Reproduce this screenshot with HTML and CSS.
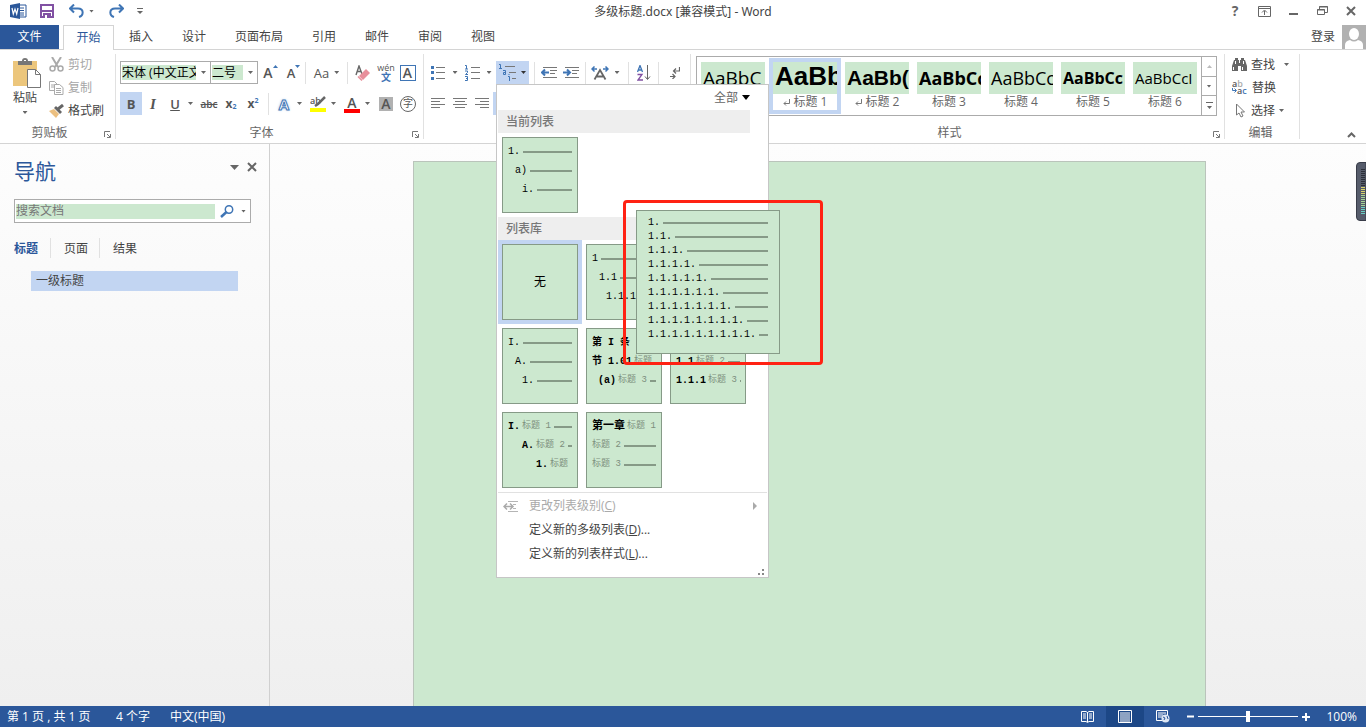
FILE: index.html
```html
<!DOCTYPE html>
<html lang="zh-CN">
<head>
<meta charset="utf-8">
<meta name="viewport" content="width=device-width, initial-scale=1">
<title>多级标题.docx - Word</title>
<link rel="stylesheet" href="styles.css">
</head>
<body>
<div class="app">
  <header class="titlebar">
    <div class="quick">
      <svg class="quick__logo" width="17" height="16" viewBox="0 0 17 16"><path d="M9 2h7v12H9z" fill="#fff" stroke="#2b579a"/><path d="M10 5h4M10 7.500h4M10 10h4M10 12h4" stroke="#2b579a"/><path d="M0 2l10-2v16L0 14z" fill="#2b579a"/><path d="M2 5l1.300 6L5 6l1.700 5L8 5" fill="none" stroke="#fff" stroke-width="1.200"/></svg>
      <button class="quick__btn quick__save" aria-label="保存"><svg width="14" height="14" viewBox="0 0 14 14"><path d="M1 1h12v12H1z" fill="#fff" stroke="#8151a3" stroke-width="2"/><path d="M2 7h10" stroke="#8151a3" stroke-width="2"/><path d="M3 9h8v5H3z" fill="#8151a3"/><path d="M5 11h2v3H5z" fill="#fff"/></svg></button>
      <button class="quick__btn quick__undo" aria-label="撤消"><svg width="15" height="14" viewBox="0 0 15 14"><path d="M1 4.500h8c6 0 6 7 1 8.500M5 0.500L1 4.500l4 4" fill="none" stroke="#3f75b5" stroke-width="2"/></svg><i class="caret"></i></button>
      <button class="quick__btn quick__redo" aria-label="重复"><svg width="15" height="14" viewBox="0 0 15 14"><path d="M14 4.500H6c-6 0-6 7-1 8.500M10 0.500l4 4-4 4" fill="none" stroke="#3f75b5" stroke-width="2"/></svg></button>
      <button class="quick__btn" aria-label="自定义快速访问工具栏"><svg width="6" height="6" viewBox="0 0 6 6"><path d="M0 .5h6" stroke="#666"/><path d="M0 3h6L3 6z" fill="#666"/></svg></button>
    </div>
    <h1 class="titlebar__name">多级标题.docx [兼容模式] - Word</h1>
    <div class="window-tools">
      <button class="window-tools__help" aria-label="帮助">?</button>
      <button aria-label="功能区显示选项"><svg width="13" height="11" viewBox="0 0 13 11"><path d="M.5.500h12v10H.5zM.5 2.500h12M6.500 9V5M4 6.500L6.500 4 9 6.500" fill="none" stroke="#666"/></svg></button>
      <button aria-label="最小化"><svg width="9" height="11" viewBox="0 0 9 11"><path d="M0 8h9" stroke="#666" stroke-width="2"/></svg></button>
      <button aria-label="还原"><svg width="11" height="10" viewBox="0 0 11 10"><path d="M2.500 3V.5h8v6H8M2 1h9M.5 3.500h7v5h-7zM0 4h8" fill="none" stroke="#666"/></svg></button>
      <button aria-label="关闭"><svg width="10" height="10" viewBox="0 0 10 10"><path d="M1 1l8 8M9 1L1 9" stroke="#666" stroke-width="2"/></svg></button>
    </div>
  </header>

  <nav class="tabs">
    <button class="tabs__file">文件</button>
    <button class="tabs__active">开始</button>
    <div class="tabs__rest">
      <button>插入</button><button>设计</button><button>页面布局</button><button>引用</button><button>邮件</button><button>审阅</button><button>视图</button>
    </div>
    <div class="account"><a href="#login">登录</a>
      <svg width="24" height="24" viewBox="0 0 24 24"><path d="M0 0h24v24H0z" fill="#b1b1b1"/><ellipse cx="12" cy="9" rx="5" ry="6" fill="#fff"/><path d="M3 24v-4q0-4 5-5 4 3 8 0 5 1 5 5v4z" fill="#fff"/></svg>
    </div>
  </nav>

  <section class="ribbon">
    <div class="group group--clip">
      <div class="group__body clip">
        <button class="paste">
          <svg width="28" height="32" viewBox="0 0 28 32"><path d="M0 3h24v25H0z" fill="#ecc67c"/><path d="M5 3h4q0-3 3-3t3 3h4v4H5z" fill="#777"/><path d="M11 2.500h2" stroke="#fff"/><path d="M14.500 11.500h8l5 5v13h-13z" fill="#fff" stroke="#777"/><path d="M22.500 11.500v5h5" fill="none" stroke="#777"/></svg>
          <span>粘贴</span><i class="caret"></i>
        </button>
        <div class="stack">
          <button class="stack__btn off"><svg width="15" height="15" viewBox="0 0 15 15"><path d="M3 0l6 10M12 0L6 10" stroke="#aaa" stroke-width="2"/><circle cx="3.500" cy="11.500" r="2.500" fill="none" stroke="#aaa" stroke-width="1.500"/><circle cx="11.500" cy="11.500" r="2.500" fill="none" stroke="#aaa" stroke-width="1.500"/></svg>剪切</button>
          <button class="stack__btn off"><svg width="15" height="14" viewBox="0 0 15 14"><path d="M.5.500h5l3 3v6h-8zM2 4h4M2 6h3" fill="none" stroke="#aaa"/><path d="M5.500 3.500h5l3.500 3v7H5.500zM7 7.500h5M7 9.500h5M7 11.500h5" fill="#fff" stroke="#aaa"/></svg>复制</button>
          <button class="stack__btn"><svg width="15" height="14" viewBox="0 0 15 14"><path d="M0 7l5-2 5 5-3 4z" fill="#ecc081"/><path d="M5 4l2-2 6 6-2 2z" fill="#666"/><path d="M9 5l5-4" stroke="#666" stroke-width="3"/></svg>格式刷</button>
        </div>
      </div>
      <div class="group__foot"><span>剪贴板</span><button class="launch" aria-label="剪贴板设置"><svg width="7" height="7" viewBox="0 0 7 7"><path d="M.5 6V.5H6M3 3l3 3M6.500 3v3.500H3" fill="none" stroke="#777"/></svg></button></div>
    </div>

    <div class="group group--font">
      <div class="group__body rows">
        <div class="row">
          <div class="combo combo--face"><input value="宋体 (中文正文)" aria-label="字体"><i class="caret"></i></div>
          <div class="combo combo--size"><input value="二号" aria-label="字号"><i class="caret"></i></div>
          <button class="tool" aria-label="增大字号"><span class="grow">A</span><svg class="up" width="5" height="3" viewBox="0 0 5 3"><path d="M0 3h5L2.500 0z" fill="#3f75b5"/></svg></button>
          <button class="tool" aria-label="减小字号"><span class="shrink">A</span><svg class="up" width="5" height="3" viewBox="0 0 5 3"><path d="M0 0h5L2.500 3z" fill="#3f75b5"/></svg></button>
          <i class="sep"></i>
          <button class="tool tool--case" aria-label="更改大小写">Aa<i class="caret"></i></button>
          <i class="sep"></i>
          <button class="tool" aria-label="清除格式"><svg width="15" height="16" viewBox="0 0 15 16"><path d="M1 10L4 1l3 8M2 6.500h4" fill="none" stroke="#666" stroke-width="1.400"/><path d="M11 4l4 4-7 7-4-4z" fill="#e8909c"/><path d="M3 11.500l4 4" stroke="#e8909c" stroke-width="1.500"/></svg></button>
          <button class="tool pinyin" aria-label="拼音指南"><span>wén</span><b>文</b></button>
          <button class="tool" aria-label="字符边框"><span class="boxed">A</span></button>
        </div>
        <div class="row">
          <button class="tool on strong">B</button>
          <button class="tool ital">I</button>
          <button class="tool under">U</button>
          <button class="caret-btn" aria-label="下划线样式"><i class="caret"></i></button>
          <button class="tool strike">abc</button>
          <button class="tool script">x<sub>2</sub></button>
          <button class="tool script">x<sup>2</sup></button>
          <i class="sep sep--wide"></i>
          <button class="tool" aria-label="文本效果"><span class="glow">A</span></button><button class="caret-btn" aria-label="文本效果选项"><i class="caret"></i></button>
          <button class="tool ink ink--yellow" aria-label="突出显示"><svg width="16" height="17" viewBox="0 0 16 17"><text x="0" y="9" class="ab">ab</text><path d="M15 2L8 9l-3 2" stroke="#666" stroke-width="2.500" fill="none"/><path d="M0 13h16v4H0z" fill="#ff0"/></svg></button><button class="caret-btn" aria-label="突出显示颜色"><i class="caret"></i></button>
          <button class="tool" aria-label="字体颜色"><span class="redbar">A</span></button><button class="caret-btn" aria-label="更多字体颜色"><i class="caret"></i></button>
          <button class="tool" aria-label="字符底纹"><span class="shade">A</span></button>
          <button class="tool" aria-label="带圈字符"><span class="ring">字</span></button>
        </div>
      </div>
      <div class="group__foot"><span>字体</span><button class="launch" aria-label="字体设置"><svg width="7" height="7" viewBox="0 0 7 7"><path d="M.5 6V.5H6M3 3l3 3M6.500 3v3.500H3" fill="none" stroke="#777"/></svg></button></div>
    </div>

    <div class="group group--para">
      <div class="group__body rows">
        <div class="row">
          <button class="tool" aria-label="项目符号"><svg width="14" height="15" viewBox="0 0 14 15"><path d="M5 2.500h9M5 7.500h9M5 13.500h9" stroke="#777"/><path d="M0 1h3v3H0zM0 6h3v3H0zM0 12h3v3H0z" fill="#3f75b5"/></svg></button><button class="caret-btn" aria-label="项目符号库"><i class="caret"></i></button>
          <button class="tool" aria-label="编号"><svg width="15" height="17" viewBox="0 0 15 17"><path d="M6 3.500h9M6 8.500h9M6 14.500h9" stroke="#777"/><path d="M0 1.500h1.500V5M0 5h3M0 7h2.500v1.500L.5 10.500H3M0 12.500h2.500v4H0M1 14.500h1.500" fill="none" stroke="#3f75b5"/></svg></button><button class="caret-btn" aria-label="编号库"><i class="caret"></i></button>
          <div class="multi">
            <button class="multi__btn" aria-label="多级列表" aria-expanded="true"><svg width="17" height="17" viewBox="0 0 17 17"><path d="M6 2.500h10M10 8.500h7M13 14.500h4" stroke="#777"/><path d="M0 .5h1.500V4M0 4.500h3M4 6.500h2.500v4H4.500v-2h2M9 12.500h1.500V17M10 10v1" fill="none" stroke="#3f75b5"/></svg><i class="caret caret--dark"></i></button>

            <div class="menu">
              <div class="menu__filter"><button>全部<i class="caret caret--big"></i></button></div>
              <h2 class="menu__head">当前列表</h2>
              <div class="tiles">
                <button class="tile"><span class="line">1.<i></i></span><span class="line in1">a)<i></i></span><span class="line in2">i.<i></i></span></button>
              </div>
              <h2 class="menu__head">列表库</h2>
              <div class="tiles">
                <button class="tile tile--none">无</button>
                <button class="tile"><span class="line">1<i></i></span><span class="line in1">1.1<i></i></span><span class="line in2">1.1.1<i></i></span></button>
                <button class="tile" aria-label="项目符号列表"><span class="line"><i></i></span><span class="line in1"><i></i></span><span class="line in2"><i></i></span></button>
                <button class="tile"><span class="line">I.<i></i></span><span class="line in1">A.<i></i></span><span class="line in2">1.<i></i></span></button>
                <button class="tile"><span class="line"><b>第 I 条</b></span><span class="line"><b>节 1.01</b><em>标题</em></span><span class="line"><b>&nbsp;(a)</b><em>标题 3</em><i></i></span></button>
                <button class="tile"><span class="line"><i></i></span><span class="line"><b>1.1</b><em>标题 2</em><i></i></span><span class="line"><b>1.1.1</b><em>标题 3</em><i></i></span></button>
                <button class="tile"><span class="line"><b>I.</b><em>标题 1</em><i></i></span><span class="line in2"><b>A.</b><em>标题 2</em><i></i></span><span class="line in4"><b>1.</b><em>标题</em></span></button>
                <button class="tile"><span class="line"><b class="chapter">第一章</b><em>标题 1</em></span><span class="line"><em>标题 2</em><i></i></span><span class="line"><em>标题 3</em><i></i></span></button>
              </div>
              <div class="menu__actions">
                <button disabled><svg width="16" height="11" viewBox="0 0 16 11"><path d="M5 .5h10M10 3.500h3M10 7.500h3M5 10.500h10" stroke="#b5b5b5"/><path d="M1 5.500h9M4 2.500l-3 3 3 3M7 2.500l3 3-3 3" fill="none" stroke="#aaa" stroke-width="1.500"/></svg><span>更改列表级别(<u>C</u>)</span><svg class="more" width="4" height="8" viewBox="0 0 4 8"><path d="M0 0v8l4-4z" fill="#aaa"/></svg></button>
                <button><span>定义新的多级列表(<u>D</u>)...</span></button>
                <button><span>定义新的列表样式(<u>L</u>)...</span></button>
              </div>
              <svg class="menu__grip" width="6" height="6" viewBox="0 0 6 6"><path d="M4 0h2v2H4zM0 4h2v2H0zM4 4h2v2H4z" fill="#888"/></svg>
              <div class="preview">
                <span class="line">1.<i></i></span><span class="line">1.1.<i></i></span><span class="line">1.1.1.<i></i></span><span class="line">1.1.1.1.<i></i></span><span class="line">1.1.1.1.1.<i></i></span><span class="line">1.1.1.1.1.1.<i></i></span><span class="line">1.1.1.1.1.1.1.<i></i></span><span class="line">1.1.1.1.1.1.1.1.<i></i></span><span class="line">1.1.1.1.1.1.1.1.1.<i></i></span>
              </div>
              <div class="mark"></div>
            </div>
          </div>
          <i class="sep"></i>
          <button class="tool" aria-label="减少缩进量"><svg width="16" height="12" viewBox="0 0 16 12"><path d="M2 .5h14M9 3.500h7M9 6.500h5M2 10.500h14" stroke="#777"/><path d="M1 5.500h7M4 2.500l-3 3 3 3" fill="none" stroke="#3f75b5" stroke-width="2"/></svg></button>
          <button class="tool" aria-label="增加缩进量"><svg width="16" height="12" viewBox="0 0 16 12"><path d="M2 .5h14M9 3.500h7M9 6.500h5M2 10.500h14" stroke="#777"/><path d="M0 5.500h7M4 2.500l3 3-3 3" fill="none" stroke="#3f75b5" stroke-width="2"/></svg></button>
          <i class="sep"></i>
          <button class="tool" aria-label="中文版式"><svg width="18" height="14" viewBox="0 0 18 14"><path d="M3.500 13.500L9 4l5.500 9.500M6 10.500h6" fill="none" stroke="#666" stroke-width="1.800"/><path d="M1 3h5M3.500.5L1 3l2.500 2.500M12 3h5M14.500.5L17 3l-2.500 2.500" fill="none" stroke="#3f75b5" stroke-width="1.500"/></svg></button><button class="caret-btn" aria-label="中文版式选项"><i class="caret"></i></button>
          <i class="sep"></i>
          <button class="tool" aria-label="排序"><svg width="14" height="16" viewBox="0 0 14 16"><path d="M.5 7L3 0.500 5.500 7M1.500 5h3" fill="none" stroke="#3f75b5" stroke-width="1.300"/><path d="M.5 9.500H5l-4 5.500h5" fill="none" stroke="#8151a3" stroke-width="1.300"/><path d="M10.500 0v14M8 11.500l2.500 3 2.500-3" fill="none" stroke="#666"/></svg></button>
          <i class="sep"></i>
          <button class="tool marks" aria-label="显示编辑标记"><svg width="10" height="12" viewBox="0 0 10 12"><path d="M9.500 0v4H4M6 1.500L3.500 4 6 6.500M0 9.500h5M2.500 7L5 9.500 2.500 12" fill="none" stroke="#666" stroke-width="1.200"/></svg></button>
        </div>
        <div class="row">
          <button class="tool" aria-label="左对齐"><svg width="14" height="11" viewBox="0 0 14 11"><path d="M0 .5h14M0 3.500h9M0 6.500h14M0 9.500h9" stroke="#777"/></svg></button>
          <button class="tool" aria-label="居中"><svg width="14" height="11" viewBox="0 0 14 11"><path d="M0 .5h14M2 3.500h10M0 6.500h14M2 9.500h10" stroke="#777"/></svg></button>
          <button class="tool" aria-label="右对齐"><svg width="14" height="11" viewBox="0 0 14 11"><path d="M0 .5h14M5 3.500h9M0 6.500h14M5 9.500h9" stroke="#777"/></svg></button>
          <button class="tool on" aria-label="两端对齐"></button>
        </div>
      </div>
      <div class="group__foot"></div>
    </div>

    <div class="group group--styles">
      <div class="group__body gallery-wrap">
        <div class="gallery">
          <button class="style" aria-label="正文"><span class="style__sample s-body">AaBbC</span></button>
          <button class="style style--on"><span class="style__sample s-h1">AaBb</span><span class="style__name"><svg width="7" height="7" viewBox="0 0 7 7"><path d="M6.500 0v4.500H1M3 2.500l-2 2 2 2" fill="none" stroke="#777"/></svg>标题 1</span></button>
          <button class="style"><span class="style__sample s-h2">AaBb(</span><span class="style__name"><svg width="7" height="7" viewBox="0 0 7 7"><path d="M6.500 0v4.500H1M3 2.500l-2 2 2 2" fill="none" stroke="#777"/></svg>标题 2</span></button>
          <button class="style"><span class="style__sample s-h3">AaBbCc</span><span class="style__name">标题 3</span></button>
          <button class="style"><span class="style__sample s-h4">AaBbCc</span><span class="style__name">标题 4</span></button>
          <button class="style"><span class="style__sample s-h5">AaBbCc</span><span class="style__name">标题 5</span></button>
          <button class="style"><span class="style__sample s-h6">AaBbCcI</span><span class="style__name">标题 6</span></button>
          <div class="gallery__nav">
            <button aria-label="上一行"><svg width="5" height="3" viewBox="0 0 5 3"><path d="M0 3h5L2.500 0z" fill="#bbb"/></svg></button>
            <button aria-label="下一行"><i class="caret"></i></button>
            <button aria-label="其他样式"><svg width="7" height="7" viewBox="0 0 7 7"><path d="M0 .5h7" stroke="#666"/><path d="M1 4h5L3.500 7z" fill="#666"/></svg></button>
          </div>
        </div>
      </div>
      <div class="group__foot"><span>样式</span><button class="launch" aria-label="样式设置"><svg width="7" height="7" viewBox="0 0 7 7"><path d="M.5 6V.5H6M3 3l3 3M6.500 3v3.500H3" fill="none" stroke="#777"/></svg></button></div>
    </div>

    <div class="group group--edit">
      <div class="group__body">
        <div class="stack">
          <button class="stack__btn"><svg width="15" height="13" viewBox="0 0 15 13"><path d="M2 2h1V0h3v2h1v3h1V2h1V0h3v2h1l2 6v5H9V8H6v5H0V8z" fill="#666"/><path d="M3.500 3v3M11.500 3v3M1.500 9v3M10.500 9v3" stroke="#fff"/></svg>查找<i class="caret caret--far"></i></button>
          <button class="stack__btn"><svg width="16" height="17" viewBox="0 0 16 17"><text x="0" y="8" class="ab">a<tspan fill="#aaa">b</tspan></text><text x="5" y="15" class="ab">a<tspan fill="#3f75b5">c</tspan></text><path d="M.5 9v2.500H4M2.500 9.500l2 2-2 2" fill="none" stroke="#3f75b5"/></svg>替换</button>
          <button class="stack__btn"><svg width="15" height="15" viewBox="0 0 15 15"><path d="M4.500 1v11l2.500-2 2 4 2-1-2-4h3.500z" fill="#fff" stroke="#777"/></svg>选择<i class="caret"></i></button>
        </div>
      </div>
      <div class="group__foot"><span>编辑</span></div>
    </div>
    <button class="collapse" aria-label="折叠功能区"><svg width="9" height="6" viewBox="0 0 9 6"><path d="M1 5l3.500-3.500L8 5" fill="none" stroke="#666" stroke-width="2"/></svg></button>
  </section>

  <main class="work">
    <aside class="nav">
      <div class="nav__head"><h2>导航</h2><button aria-label="任务窗格选项"><svg width="9" height="5" viewBox="0 0 9 5"><path d="M0 0h9L4.500 5z" fill="#666"/></svg></button><button aria-label="关闭窗格"><svg width="10" height="10" viewBox="0 0 10 10"><path d="M1 1l8 8M9 1L1 9" stroke="#666" stroke-width="2"/></svg></button></div>
      <div class="search"><input placeholder="搜索文档" aria-label="搜索文档"><button aria-label="搜索"><svg width="14" height="13" viewBox="0 0 14 13"><circle cx="9" cy="4.500" r="3.700" fill="none" stroke="#3f75b5" stroke-width="1.500"/><path d="M6.500 7L1 12" stroke="#3f75b5" stroke-width="2.500"/></svg></button><button aria-label="搜索选项"><i class="caret"></i></button></div>
      <div class="nav__tabs"><button>标题</button><button>页面</button><button>结果</button></div>
      <a class="nav__item" href="#h1">一级标题</a>
    </aside>
    <div class="canvas"><div class="page"></div></div>
    <svg class="meter" width="10" height="59" viewBox="0 0 10 59"><path d="M10 .5H4Q.5.500.5 4v51q0 3.500 3.500 3.500h6z" fill="#565c6b" stroke="#383c48"/><path d="M6 7v18" stroke="#2b2f38" stroke-width="4" stroke-dasharray="1 1" transform="translate(1 0)"/><path d="M7 25v8" stroke="#d8d36a" stroke-width="4" stroke-dasharray="1 1"/><path d="M7 33v12" stroke="#a5d394" stroke-width="4" stroke-dasharray="1 1"/><path d="M7 45v8" stroke="#69cfc4" stroke-width="4" stroke-dasharray="1 1"/></svg>
  </main>

  <footer class="status">
    <span class="status__pages">第 1 页 , 共 1 页</span><span class="status__words">4 个字</span><span>中文(中国)</span>
    <div class="status__views">
      <button aria-label="阅读视图"><svg width="13" height="12" viewBox="0 0 13 12"><path d="M.5.500H5l1.500 1L8 .5h4.500v10H8l-1.500 1-1.500-1H.5zM6.500 1v10M2 3h3M2 5h3M2 7h3M8 3h3M8 5h3M8 7h3" fill="none" stroke="#fff"/></svg></button>
      <button class="status__on" aria-label="页面视图"><svg width="14" height="13" viewBox="0 0 14 13"><path d="M.5.500h13v12H.5zM2 3h10M2 5h10M2 7h10M2 9h10M2 11h10" fill="none" stroke="#fff"/></svg></button>
      <button aria-label="Web 版式视图"><svg width="14" height="13" viewBox="0 0 14 13"><path d="M6 10.500H.5V.5h11V5M2 3h8M2 5h5M2 7h4" fill="none" stroke="#fff"/><circle cx="9.500" cy="8.500" r="4" fill="#dce6f4"/><path d="M7 7l2 1-1 2M11 6l1 3" stroke="#2b579a" fill="none"/></svg></button>
    </div>
    <div class="zoom"><button aria-label="缩小"><svg width="7" height="7" viewBox="0 0 7 7"><path d="M0 3.500h7" stroke="#fff" stroke-width="2"/></svg></button><input type="range" min="0" max="100" value="50" aria-label="显示比例"><button aria-label="放大"><svg width="8" height="8" viewBox="0 0 8 8"><path d="M0 4h8M4 0v8" stroke="#fff" stroke-width="2"/></svg></button><span>100%</span></div>
  </footer>
</div>
</body>
</html>
```

FILE: styles.css
```css
* { box-sizing: border-box; }
body { margin: 0; font: 12px/16px "Open Sans", "Noto Sans CJK SC", sans-serif; color: #444; background: #fff; }
button { font: inherit; color: inherit; background: none; border: 0; padding: 0; margin: 0; display: flex; align-items: center; justify-content: center; white-space: nowrap; }
input { font: inherit; color: inherit; border: 0; padding: 0; margin: 0; min-width: 0; border-radius: 0; }
h1, h2 { margin: 0; font-size: 12px; font-weight: 400; }
a { color: inherit; text-decoration: none; }
svg { flex: none; display: block; }
.app { display: flex; flex-direction: column; height: 100vh; overflow: hidden; }

.caret { flex: none; width: 5px; height: 3px; background: #666; clip-path: polygon(0 0, 100% 0, 50% 100%); }
.caret--dark { background: #333; }
.caret--big { width: 8px; height: 5px; background: #000; }

/* Title bar */
.titlebar { height: 25px; flex: none; display: grid; grid-template-columns: 1fr auto 1fr; align-items: start; }
.quick { display: flex; align-items: center; padding-left: 10px; height: 22px; }
.quick__save { margin-left: 13px; }
.quick__undo { margin-left: 15px; gap: 5px; }
.quick__redo { margin-left: 15px; margin-right: 13px; }
.titlebar__name { line-height: 23px; font-family: "Noto Sans", "Noto Sans CJK SC", sans-serif; }
.window-tools { display: flex; justify-content: flex-end; align-items: center; height: 22px; padding-right: 4px; }
.window-tools button { width: 22px; margin-left: 7px; }
.window-tools .window-tools__help { font-size: 14px; font-weight: 700; color: #666; }

/* Tabs */
.tabs { height: 25px; flex: none; display: flex; border-bottom: 1px solid #d4d4d4; }
.tabs__file { width: 59px; background: #2b579a; color: #fff; }
.tabs__active { width: 51px; height: 25px; margin-left: 4px; color: #2b579a; background: #fff; border: 1px solid #d4d4d4; border-bottom: 0; }
.tabs__rest { display: flex; gap: 29px; padding-left: 15px; }
.account { margin-left: auto; display: flex; align-items: center; gap: 7px; }

/* Ribbon */
.ribbon { height: 94px; flex: none; display: flex; border-bottom: 1px solid #d4d4d4; position: relative; z-index: 2; }
.group { display: flex; flex-direction: column; padding-right: 1px; background: linear-gradient(#e1e1e1, #e1e1e1) right 4px / 1px 85px no-repeat; }
.group--clip { width: 116px; }
.group--font { width: 308px; }
.group--para { width: 267px; }
.group--styles { width: 534px; }
.group--edit { width: 75px; }
.group__body { height: 73px; }
.group__foot { height: 21px; display: flex; align-items: center; color: #666; padding: 1px 3px 0 0; }
.group__foot span { flex: 1; text-align: center; }
.launch { width: 9px; margin: 3px 0 0 4px; }
.rows { padding: 11px 0 0 4px; display: flex; flex-direction: column; gap: 8px; }
.group--para .rows { padding-left: 3px; }
.row { display: flex; height: 23px; align-items: center; }
.sep { width: 1px; height: 22px; background: #e1e1e1; margin: 0 3px; flex: none; }
.sep--wide { margin: 0 4px; }
.tool { width: 22px; height: 23px; flex: none; color: #555; font-size: 14px; }
.on { background: #c2d5f2; }
.caret-btn { width: 12px; height: 23px; flex: none; }
.group--font .caret-btn { padding-right: 3px; }
.caret-btn + .sep { margin: 0 4px 0 5px; }
.clip { display: flex; padding: 3px 0 0 10px; }
.paste { flex-direction: column; justify-content: flex-start; align-items: center; width: 30px; padding-top: 5px; }
.paste svg { margin-left: 3px; }
.paste span { margin-top: -1px; line-height: 18px; }
.paste .caret { margin-top: 4px; }
.stack { display: flex; flex-direction: column; }
.clip .stack { margin-left: 9px; }
.stack__btn { height: 23px; gap: 4px; justify-content: flex-start; }
.off { color: #a6a6a6; }
.combo { display: flex; align-items: center; border: 1px solid #ababab; height: 23px; padding: 0 4px 0 1px; gap: 5px; flex: none; color: #000; }
.combo input { flex: 1; width: 0; background: #cce8cf; height: 15px; line-height: 15px; }
.combo--face { width: 91px; }
.combo--size { width: 48px; margin-left: -1px; }
.grow { font-size: 14px; font-weight: 600; margin-left: 3px; }
.shrink { font-size: 13px; font-weight: 600; margin-left: 5px; }
.up { align-self: flex-start; margin-top: 4px; }
.tool--case { width: 35px; gap: 5px; font-size: 13px; }
.pinyin { flex-direction: column; font-size: 9px; line-height: 8px; }
.pinyin span { padding-left: 4px; }
.pinyin b { color: #3f75b5; line-height: 10px; font-size: 10px; padding-left: 4px; }
.boxed { border: 1px solid #3f75b5; width: 16px; line-height: 14px; font-weight: 600; font-size: 14px; margin-left: 3px; }
.strong { font-weight: 700; font-size: 13px; }
.ital { font-style: italic; font-family: "Liberation Serif", serif; font-size: 15px; font-weight: 600; }
.under { text-decoration: underline; font-weight: 600; font-size: 13px; }
.strike { text-decoration: line-through; font-size: 10px; font-weight: 600; }
.script { font-weight: 700; font-size: 12px; }
.script sub, .script sup { font-size: 7px; color: #3f75b5; line-height: 7px; }
.script sub { align-self: flex-end; padding-bottom: 5px; }
.script sup { align-self: flex-start; padding-top: 5px; }
.glow { color: #fff; font-size: 15px; font-weight: 700; -webkit-text-stroke: 1px #3f75b5; text-shadow: 0 0 3px #8fb6e2; }
.ab { font: 600 9px "Open Sans", sans-serif; fill: #555; }
.redbar { width: 16px; border-bottom: 4px solid #f00; line-height: 12px; font-weight: 600; padding-top: 2px; }
.shade { width: 14px; line-height: 14px; background: #b1b1b1; font-weight: 600; }
.ring { width: 16px; height: 16px; border: 1px solid #666; border-radius: 50%; font-size: 10px; line-height: 13px; }

.multi { position: relative; margin: 0 2px 0 1px; }
.multi__btn { width: 33px; height: 23px; background: #c2d5f2; gap: 5px; }
.marks { margin-left: 2px; }

/* Multilevel list menu */
.menu { position: absolute; z-index: 5; left: 0; top: 100%; width: 273px; background: #fff; border: 1px solid #c6c6c6; padding: 0 1px 11px; }
.menu__filter { display: flex; justify-content: flex-end; height: 25px; padding-right: 17px; color: #666; }
.menu__filter button { gap: 4px; }
.menu__head { background: #eee; color: #777; font-weight: 500; height: 23px; line-height: 23px; width: 252px; padding-left: 8px; }
.tiles { display: grid; grid-template-columns: repeat(3, 76px); gap: 8px; padding: 4px; }
.tile { height: 76px; background: #cce8cf; border: 1px solid #869a87; display: flex; flex-direction: column; justify-content: flex-start; align-items: stretch; padding: 4px 5px; color: #000; overflow: hidden; }
.tile--none { justify-content: center; align-items: center; outline: 4px solid #c2d5f2; }
.line { display: flex; align-items: center; gap: 2px; height: 19px; font: 10px/19px "Liberation Mono", "Noto Sans CJK SC", monospace; text-align: left; }
.line i { flex: 1; height: 2px; background: #869a87; margin-left: 1px; }
.line b { font-weight: 700; }
.line .chapter { font-size: 11px; }
.line em { font-style: normal; color: #7c8f7d; font-size: 9px; }
.in1 { padding-left: 7px; }
.in2 { padding-left: 14px; }
.in4 { padding-left: 28px; }
.menu__actions { border-top: 1px solid #e1e1e1; padding-top: 1px; }
.menu__actions button { width: 100%; height: 24px; justify-content: flex-start; padding: 0 10px 0 31px; }
.menu__actions button:disabled { color: #aaa; padding-left: 5px; gap: 10px; }
.menu__actions .more { margin-left: auto; }
.menu__grip { position: absolute; right: 4px; bottom: 2px; }
.preview { position: absolute; left: 139px; top: 125px; width: 144px; height: 144px; padding: 5px 11px; background: #cce8cf; border: 1px solid #869a87; color: #000; }
.preview .line { height: 14px; line-height: 14px; }
.mark { position: absolute; left: 126px; top: 115px; width: 200px; height: 165px; border: 3px solid #ff2213; border-radius: 4px; }

/* Style gallery */
.gallery-wrap { padding: 6px 7px 0 5px; }
.gallery { display: flex; height: 60px; border: 1px solid #ababab; }
.style { flex: 1; flex-direction: column; justify-content: flex-start; min-width: 0; margin: 1px 0; padding: 4px; color: #666; }
.style__name { display: flex; align-items: center; gap: 4px; }
.style--on { outline: 4px solid #c2d5f2; outline-offset: -4px; }
.style__sample { width: 100%; height: 32px; background: #cce8cf; color: #000; overflow: hidden; text-align: left; padding-left: 2px; line-height: 32px; flex: none; }
.s-body { font-size: 19px; }
.s-h1 { font: 700 26px/28px "Liberation Sans", sans-serif; }
.s-h2 { font: 700 21px/32px "Liberation Sans", sans-serif; }
.s-h3 { font-size: 18px; font-weight: 700; }
.s-h4 { font-size: 18px; }
.s-h5 { font-size: 16px; font-weight: 700; }
.s-h6 { font-size: 15px; font-weight: 500; }
.gallery__nav { width: 15px; border-left: 1px solid #ababab; display: flex; flex-direction: column; }
.gallery__nav button { flex: 1; }
.gallery__nav button + button { border-top: 1px solid #ababab; }
.group--edit .group__body { padding: 3px 0 0 7px; }
.caret--far { margin-left: 5px; }
.collapse { margin: auto 10px 5px auto; }

/* Work area */
.work { flex: 1; min-height: 0; display: flex; position: relative; background: linear-gradient(#fdfdfd, #efefef); }
.nav { width: 270px; flex: none; border-right: 1px solid #d0d0d0; padding: 12px 18px 0 14px; display: flex; flex-direction: column; }
.nav__head { display: flex; gap: 8px; height: 30px; align-items: flex-start; margin-right: -6px; }
.nav__head h2 { font-size: 21px; line-height: 30px; color: #2b579a; margin-right: auto; }
.nav__head button { height: 22px; }
.search { display: flex; align-items: center; height: 24px; margin-top: 13px; border: 1px solid #ababab; background: #fff; padding: 0 4px 0 1px; gap: 5px; }
.search input { flex: 1; height: 15px; background: #cce8cf; }
.search input::placeholder { color: #777; opacity: 1; }
.search button + button { margin-left: 2px; }
.nav__tabs { display: flex; margin-top: 15px; height: 20px; }
.nav__tabs button { padding: 1px 11px 0 13px; border-right: 1px solid #e1e1e1; }
.nav__tabs button:first-child { padding-left: 0; padding-right: 12px; color: #2b579a; font-weight: 700; }
.nav__tabs button:last-child { border: 0; }
.nav__item { margin: 13px 13px 0 17px; height: 20px; line-height: 20px; padding-left: 5px; background: #c2d5f2; }
.canvas { flex: 1; display: flex; justify-content: center; padding: 17px 17px 0 0; }
.page { width: 793px; background: #cce8cf; border: 1px solid #bac4bb; border-bottom: 0; }
.meter { position: absolute; right: 0; top: 18px; }

/* Status bar */
.status { height: 21px; flex: none; display: flex; align-items: center; gap: 19px; background: #2b579a; color: #fff; padding: 0 9px 0 7px; }
.status__pages { min-width: 90px; }
.status__words { min-width: 35px; }
.status__views { display: flex; margin-left: auto; align-self: stretch; }
.status__views button { width: 38px; }
.status__on { background: #1c4786; }
.zoom { display: flex; align-items: center; gap: 4px; margin-left: -14px; }
.zoom span { margin-left: 12px; }
.zoom input { appearance: none; width: 100px; height: 13px; background: linear-gradient(#fff, #fff) center / 100% 1px no-repeat; }
.zoom input::-webkit-slider-thumb { appearance: none; width: 4px; height: 11px; background: #fff; }
```
